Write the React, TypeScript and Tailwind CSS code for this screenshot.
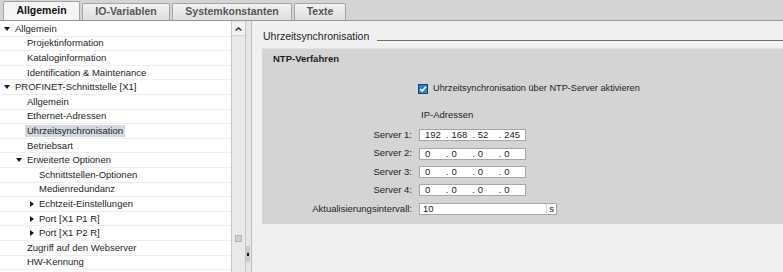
import type { ReactNode } from "react";

type Node = { level: number; text: string; arrow?: "down" | "right"; selected?: boolean };

const tree: Node[] = [
  { level: 0, text: "Allgemein", arrow: "down" },
  { level: 1, text: "Projektinformation" },
  { level: 1, text: "Kataloginformation" },
  { level: 1, text: "Identification & Maintenance" },
  { level: 0, text: "PROFINET-Schnittstelle [X1]", arrow: "down" },
  { level: 1, text: "Allgemein" },
  { level: 1, text: "Ethernet-Adressen" },
  { level: 1, text: "Uhrzeitsynchronisation", selected: true },
  { level: 1, text: "Betriebsart" },
  { level: 1, text: "Erweiterte Optionen", arrow: "down" },
  { level: 2, text: "Schnittstellen-Optionen" },
  { level: 2, text: "Medienredundanz" },
  { level: 2, text: "Echtzeit-Einstellungen", arrow: "right" },
  { level: 2, text: "Port [X1 P1 R]", arrow: "right" },
  { level: 2, text: "Port [X1 P2 R]", arrow: "right" },
  { level: 1, text: "Zugriff auf den Webserver" },
  { level: 1, text: "HW-Kennung" },
];

const tabs = [
  { label: "Allgemein", width: "w-[77px]", active: true },
  { label: "IO-Variablen", width: "w-[88px]" },
  { label: "Systemkonstanten", width: "w-[120px]" },
  { label: "Texte", width: "w-[52px]" },
];

const servers = [
  ["192", "168", "52", "245"],
  ["0", "0", "0", "0"],
  ["0", "0", "0", "0"],
  ["0", "0", "0", "0"],
];

const indent = ["pl-[3px]", "pl-[15px]", "pl-[27px]"];

function Arrow({ dir }: { dir: "down" | "right" }): JSX.Element {
  return dir === "down" ? (
    <svg width="6" height="4" viewBox="0 0 6 4">
      <path d="M0 0 H6 L3 4 Z" fill="#1a1a1a" />
    </svg>
  ) : (
    <svg width="4" height="6" viewBox="0 0 4 6">
      <path d="M0 0 V6 L4 3 Z" fill="#1a1a1a" />
    </svg>
  );
}

function FormRow({ label, children }: { label: string; children: ReactNode }): JSX.Element {
  return (
    <div className="flex h-[18.4px] items-center">
      <span className="w-[150px] text-right">{label}</span>
      <div className="ml-[7px]">{children}</div>
    </div>
  );
}

function IpField({ parts }: { parts: string[] }): JSX.Element {
  return (
    <div className="flex h-[12px] w-[107px] items-center border border-[#a8a8a8] bg-white leading-[10px]">
      <span className="w-[27px] pl-[5px]">{parts[0]}</span>
      {parts.slice(1).map((p, i) => (
        <span key={i} className="flex w-[28px]">
          <span>.</span>
          <span className="ml-[3px]">{p}</span>
        </span>
      ))}
    </div>
  );
}

export default function App(): JSX.Element {
  return (
    <div className="flex h-[272px] w-[783px] flex-col overflow-hidden bg-[#f0f0f0] font-['Liberation_Sans',Arial,sans-serif] text-[9.5px] text-[#1e1e1e]">
      {/* tab strip */}
      <div className="flex h-[21px] shrink-0 items-end gap-[2px] border-b border-[#999999] bg-[#d4d4d4] pl-[3px]">
        {tabs.map((t) => (
          <div
            key={t.label}
            className={`flex items-center justify-center rounded-t-[2px] border border-b-0 border-[#a4a4a4] text-[10.5px] font-bold ${t.width} ${
              t.active
                ? "h-[19px] bg-[#f5f5f5] text-[#111111]"
                : "h-[17px] bg-gradient-to-b from-[#f2f2f2] to-[#dedede] text-[#555555]"
            }`}
          >
            {t.label}
          </div>
        ))}
      </div>

      <div className="flex min-h-0 flex-1">
        {/* tree */}
        <div className="w-[231px] shrink-0 bg-white pt-[1px]">
          {tree.map((n, i) => (
            <div
              key={i}
              className={`flex h-[14.6px] items-center border-b border-[#eeeeee] ${indent[n.level]}`}
            >
              <span className="flex w-[12px] justify-end pr-[5px]">
                {n.arrow && <Arrow dir={n.arrow} />}
              </span>
              <span
                className={`-ml-[2px] px-[2px] leading-[12px] ${n.selected ? "bg-[#d3d9e3]" : ""}`}
              >
                {n.text}
              </span>
            </div>
          ))}
        </div>

        {/* scrollbar */}
        <div className="flex w-[15px] shrink-0 flex-col border-x border-[#c6c6c6] bg-[#e9e9e9] pt-[2px]">
          <div className="flex h-[13px] items-center justify-center border-b border-[#d6d6d6] bg-[#f3f3f3]">
            <svg width="7" height="4" viewBox="0 0 7 4">
              <path d="M0.5 3.5 L3.5 0.8 L6.5 3.5" stroke="#333333" strokeWidth="1.3" fill="none" />
            </svg>
          </div>
          <div className="mx-auto mb-[30px] mt-auto h-[7px] w-[7px] border border-[#b4b4b4] bg-[#cfcfcf]" />
        </div>

        {/* splitter */}
        <div className="flex w-[6px] shrink-0 flex-col border-r border-[#bdbdbd] bg-[#e6e6e6]">
          <div className="mb-[10px] mt-auto flex h-[16px] w-[4px] items-center justify-center bg-[#cbcbcb]">
            <div className="h-[3px] w-[2px] bg-[#111111]" />
          </div>
        </div>

        {/* content */}
        <div className="flex min-w-0 flex-1 flex-col">
          <div className="mt-[5px] flex h-[22px] items-center pl-[11px]">
            <span className="text-[10.5px]">Uhrzeitsynchronisation</span>
            <div className="ml-[8px] mt-[8px] h-[3px] flex-1 border-b border-t border-b-white border-t-[#6f6f6f]" />
          </div>

          <div className="ml-[10px] h-[176px] border-t border-[#e2e2e2] bg-[#d4d4d4]">
            <div className="flex h-[20px] items-center pl-[11px] font-bold">NTP-Verfahren</div>

            <div className="mt-[12px] flex h-[16px] items-center pl-[156px]">
              <svg width="10" height="10" viewBox="0 0 10 10">
                <rect x="0.5" y="0.5" width="9" height="9" fill="#2f7fd0" stroke="#1b3f6e" />
                <path d="M2.2 5 L4.2 7 L7.9 2.8" stroke="white" strokeWidth="1.6" fill="none" />
              </svg>
              <span className="ml-[5px] text-[9.2px]">Uhrzeitsynchronisation über NTP-Server aktivieren</span>
            </div>

            <div className="mt-[11px] flex h-[15px] items-center pl-[159px]">IP-Adressen</div>

            <div className="mt-[3px] flex flex-col">
              {servers.map((parts, i) => (
                <FormRow key={i} label={`Server ${i + 1}:`}>
                  <IpField parts={parts} />
                </FormRow>
              ))}
              <FormRow label="Aktualisierungsintervall:">
                <div className="flex h-[12px] w-[138px] items-center border border-[#a8a8a8] bg-white leading-[10px]">
                  <span className="flex-1 pl-[3px]">10</span>
                  <span className="flex h-full w-[10px] items-center justify-center border-l border-[#d8d8d8]">
                    s
                  </span>
                </div>
              </FormRow>
            </div>
          </div>
        </div>
      </div>
    </div>
  );
}
